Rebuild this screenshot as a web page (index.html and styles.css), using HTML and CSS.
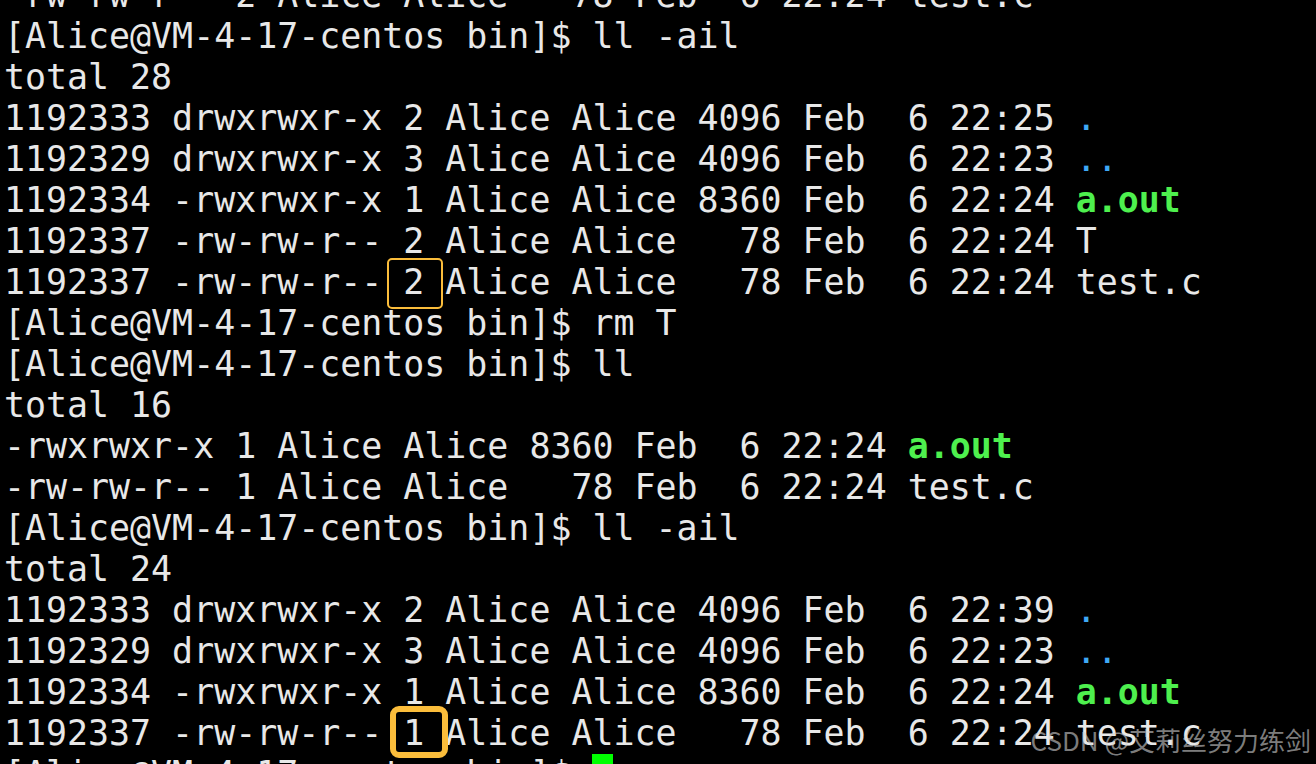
FILE: index.html
```html
<!DOCTYPE html>
<html>
<head>
<meta charset="utf-8">
<title>Terminal</title>
<link rel="stylesheet" href="styles.css">
</head>
<body>
<div class="screen">
  <div class="term">
    <div class="ln">-rw-rw-r-- 2 Alice Alice   78 Feb  6 22:24 test.c</div>
    <div class="ln">[Alice@VM-4-17-centos bin]$ ll -ail</div>
    <div class="ln">total 28</div>
    <div class="ln">1192333 drwxrwxr-x 2 Alice Alice 4096 Feb  6 22:25 <span class="dir">.</span></div>
    <div class="ln">1192329 drwxrwxr-x 3 Alice Alice 4096 Feb  6 22:23 <span class="dir">..</span></div>
    <div class="ln">1192334 -rwxrwxr-x 1 Alice Alice 8360 Feb  6 22:24 <span class="exe">a.out</span></div>
    <div class="ln">1192337 -rw-rw-r-- 2 Alice Alice   78 Feb  6 22:24 T</div>
    <div class="ln">1192337 -rw-rw-r-- 2 Alice Alice   78 Feb  6 22:24 test.c</div>
    <div class="ln">[Alice@VM-4-17-centos bin]$ rm T</div>
    <div class="ln">[Alice@VM-4-17-centos bin]$ ll</div>
    <div class="ln">total 16</div>
    <div class="ln">-rwxrwxr-x 1 Alice Alice 8360 Feb  6 22:24 <span class="exe">a.out</span></div>
    <div class="ln">-rw-rw-r-- 1 Alice Alice   78 Feb  6 22:24 test.c</div>
    <div class="ln">[Alice@VM-4-17-centos bin]$ ll -ail</div>
    <div class="ln">total 24</div>
    <div class="ln">1192333 drwxrwxr-x 2 Alice Alice 4096 Feb  6 22:39 <span class="dir">.</span></div>
    <div class="ln">1192329 drwxrwxr-x 3 Alice Alice 4096 Feb  6 22:23 <span class="dir">..</span></div>
    <div class="ln">1192334 -rwxrwxr-x 1 Alice Alice 8360 Feb  6 22:24 <span class="exe">a.out</span></div>
    <div class="ln">1192337 -rw-rw-r-- 1 Alice Alice   78 Feb  6 22:24 test.c</div>
    <div class="ln">[Alice@VM-4-17-centos bin]$ <span class="cursor"> </span></div>
  </div>
  <div class="mark mark-thin"></div>
  <div class="mark mark-thick"></div>
  <div class="watermark">CSDN @艾莉丝努力练剑</div>
</div>
</body>
</html>
```

FILE: styles.css
```css
html, body {
  margin: 0;
  padding: 0;
  background: #000;
  overflow: hidden;
}

.screen {
  position: relative;
  width: 1316px;
  height: 764px;
  overflow: hidden;
  background: #000;
}

.term {
  margin-top: -25px;
  padding-left: 4px;
  font-family: "DejaVu Sans Mono", monospace;
  font-size: 34.92px;
  line-height: 41px;
  color: #e8e8e8;
}

.ln {
  white-space: pre;
  height: 41px;
}

.dir {
  color: #3fa9f5;
}

.exe {
  color: #4ef04e;
  font-weight: bold;
}

.cursor {
  display: inline-block;
  width: 21px;
  height: 41px;
  background: #00ff00;
  vertical-align: top;
}

.mark {
  position: absolute;
  box-sizing: border-box;
  border-style: solid;
  border-color: #fbbd3b;
}

.mark-thin {
  left: 387px;
  top: 258px;
  width: 56px;
  height: 51px;
  border-width: 2px;
  border-radius: 5px;
}

.mark-thick {
  left: 390px;
  top: 706px;
  width: 58px;
  height: 52px;
  border-width: 6px;
  border-radius: 9px;
}

.watermark {
  position: absolute;
  right: 5px;
  top: 723px;
  font-family: "Noto Sans CJK SC", "Noto Sans", sans-serif;
  font-size: 26px;
  line-height: 34px;
  color: rgba(210, 210, 210, 0.6);
  white-space: nowrap;
}
```
